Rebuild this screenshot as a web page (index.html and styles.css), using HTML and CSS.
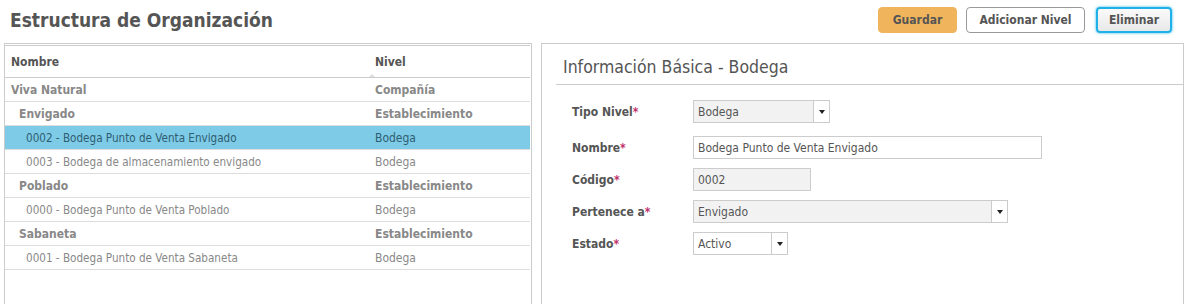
FILE: index.html
```html
<!DOCTYPE html>
<html lang="es">
<head>
    <meta charset="UTF-8">
    <title>Estructura de Organización</title>
    <link rel="stylesheet" href="styles.css">
</head>
<body>

<header class="top-bar">
    <h1>Estructura de Organización</h1>
    <div class="actions">
        <button class="btn btn-save">Guardar</button>
        <button class="btn btn-add">Adicionar Nivel</button>
        <button class="btn btn-delete">Eliminar</button>
    </div>
</header>

<div class="content">
    <div class="tree-panel">
        <div class="grid">
            <div class="grid-head">
                <div class="col-name">Nombre</div>
                <div class="col-level">Nivel</div>
                <span class="sort-mark"></span>
            </div>
            <div class="row level-0"><div class="col-name">Viva Natural</div><div class="col-level">Compañía</div></div>
            <div class="row level-1"><div class="col-name">Envigado</div><div class="col-level">Establecimiento</div></div>
            <div class="row level-2 selected"><div class="col-name">0002 - Bodega Punto de Venta Envigado</div><div class="col-level">Bodega</div></div>
            <div class="row level-2"><div class="col-name">0003 - Bodega de almacenamiento envigado</div><div class="col-level">Bodega</div></div>
            <div class="row level-1"><div class="col-name">Poblado</div><div class="col-level">Establecimiento</div></div>
            <div class="row level-2"><div class="col-name">0000 - Bodega Punto de Venta Poblado</div><div class="col-level">Bodega</div></div>
            <div class="row level-1"><div class="col-name">Sabaneta</div><div class="col-level">Establecimiento</div></div>
            <div class="row level-2"><div class="col-name">0001 - Bodega Punto de Venta Sabaneta</div><div class="col-level">Bodega</div></div>
        </div>
    </div>

    <div class="detail-panel">
        <h2>Información Básica - Bodega</h2>
        <div class="form">
            <div class="field first">
                <label>Tipo Nivel<span class="req">*</span></label>
                <div class="combo combo-tipo disabled"><span>Bodega</span><i class="arrow"></i></div>
            </div>
            <div class="field">
                <label>Nombre<span class="req">*</span></label>
                <div class="text-input input-nombre">Bodega Punto de Venta Envigado</div>
            </div>
            <div class="field">
                <label>Código<span class="req">*</span></label>
                <div class="text-input input-codigo disabled">0002</div>
            </div>
            <div class="field">
                <label>Pertenece a<span class="req">*</span></label>
                <div class="combo combo-pertenece disabled"><span>Envigado</span><i class="arrow"></i></div>
            </div>
            <div class="field">
                <label>Estado<span class="req">*</span></label>
                <div class="combo combo-estado"><span>Activo</span><i class="arrow"></i></div>
            </div>
        </div>
    </div>
</div>

</body>
</html>
```

FILE: styles.css
```css
* {
    margin: 0;
    padding: 0;
    box-sizing: border-box;
}

body {
    font-family: Tahoma, "DejaVu Sans Condensed", "DejaVu Sans", sans-serif;
    font-size: 12px;
    color: #666;
    background: #fff;
    overflow: hidden;
}

.top-bar {
    display: flex;
    justify-content: space-between;
    align-items: center;
    height: 42px;
    padding: 0 18px 2px 10px;
}

.top-bar h1 {
    font-size: 19px;
    font-weight: bold;
    color: #555;
}

.actions {
    display: flex;
    gap: 9px;
    align-items: center;
}

.btn {
    font-family: inherit;
    font-size: 12px;
    font-weight: bold;
    color: #555;
    height: 26px;
    border-radius: 4px;
    border: 1px solid #999;
    background: #fff;
    padding: 0;
    white-space: nowrap;
}

.btn-save {
    background: #f0b55c;
    border-color: #f0b55c;
    width: 79px;
}

.btn-add {
    width: 119px;
}

.btn-delete {
    width: 76px;
    margin-left: 2px;
    background: linear-gradient(#fafafa, #e8e8e8);
    border: 2px solid #1eb0e6;
    box-shadow: 0 0 3px #35b8ea;
}

.content {
    display: flex;
    gap: 9px;
    padding: 1px 6px 0 4px;
}

.tree-panel {
    width: 528px;
    height: 270px;
    border: 1px solid #ccc;
    border-bottom: none;
    padding: 1px 1px 0 0;
}

.grid {
    border-top: 1px solid #ccc;
}

.grid-head, .row {
    display: flex;
    align-items: center;
    border-bottom: 1px solid #ddd;
}

.grid-head {
    position: relative;
    height: 32px;
    font-weight: bold;
    color: #555;
    border-bottom-color: #ccc;
}

.grid-head .col-name {
    padding-left: 6px;
}

.col-name {
    width: 370px;
    white-space: nowrap;
}

.sort-mark {
    position: absolute;
    left: 364px;
    bottom: 0;
    border: 3px solid transparent;
    border-bottom-color: #ddd;
}

.row {
    height: 24px;
}

.level-0, .level-1 {
    font-weight: bold;
    color: #888;
}

.level-0 .col-name {
    padding-left: 6px;
}

.level-1 .col-name {
    padding-left: 14px;
}

.level-2 {
    color: #888;
    font-size: 11.6px;
}

.level-2 .col-name {
    padding-left: 21px;
}

.level-2 .col-level {
    font-size: 12px;
}

.row.selected {
    background: #7ecbe7;
    color: #2f5d70;
}

.detail-panel {
    flex: 1;
    height: 270px;
    border: 1px solid #ccc;
    border-bottom: none;
}

.detail-panel h2 {
    font-size: 17.5px;
    font-weight: normal;
    color: #555;
    margin-left: 14px;
    padding: 13px 0 7px 7px;
    border-bottom: 1px solid #ccc;
}

.form {
    display: flex;
    flex-direction: column;
    gap: 9px;
    padding: 15px 0 0 30px;
}

.field {
    display: flex;
    align-items: center;
}

.field.first {
    margin-bottom: 4px;
}

.field label {
    width: 121px;
    font-weight: bold;
    color: #555;
}

.req {
    color: #c0306a;
}

.text-input, .combo {
    height: 23px;
    border: 1px solid #ccc;
    background: #fff;
    color: #555;
    display: flex;
    align-items: center;
    padding-left: 4px;
}

.disabled {
    background: #f2f2f2;
}

.combo span {
    flex: 1;
}

.arrow {
    width: 16px;
    height: 100%;
    border-left: 1px solid #ccc;
    background: #fff;
    display: flex;
    align-items: center;
    justify-content: center;
}

.arrow::after {
    content: "";
    border: 3px solid transparent;
    border-top: 4px solid #222;
    border-bottom: none;
}

.combo-tipo {
    width: 137px;
}

.input-nombre {
    width: 349px;
}

.input-codigo {
    width: 118px;
}

.combo-pertenece {
    width: 315px;
}

.combo-estado {
    width: 95px;
}
```
